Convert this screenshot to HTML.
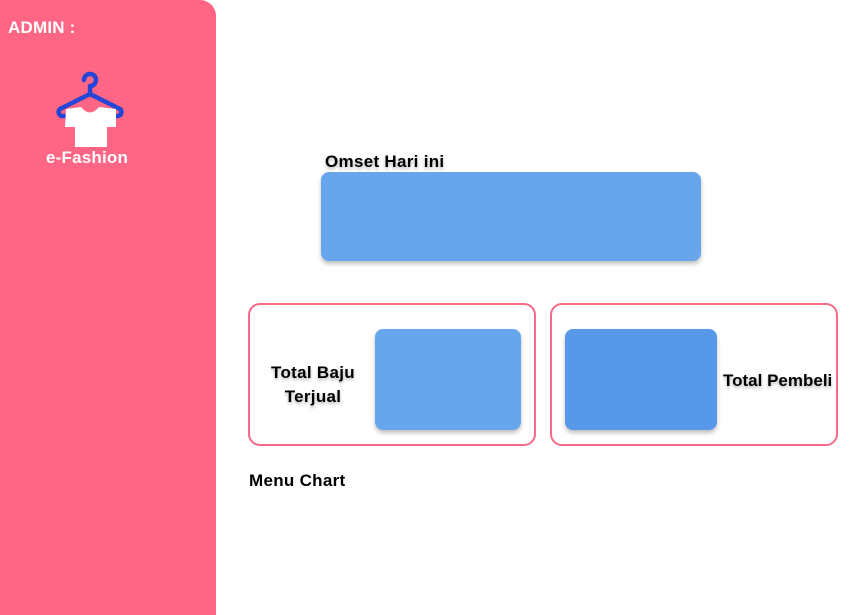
<!DOCTYPE html>
<html><head><meta charset="utf-8"><style>
body{margin:0;width:865px;height:615px;background:#fff;position:relative;overflow:hidden;font-family:"Liberation Sans",sans-serif;font-weight:bold}
.side{position:absolute;left:0;top:0;width:216px;height:615px;background:#FF6584;border-top-right-radius:16px}
.t{position:absolute;color:#000;font-size:17px;letter-spacing:0.3px;text-shadow:0 2px 3px rgba(0,0,0,.3);white-space:nowrap}
.box{position:absolute;border:2px solid #F76A87;border-radius:12px;box-sizing:border-box}
.b{position:absolute;border-radius:8px;box-shadow:0 3px 4px rgba(0,0,0,.25)}
</style></head><body>
<div class="side"></div>
<div style="position:absolute;left:8px;top:18px;color:#fff;font-size:17px;letter-spacing:0.2px">ADMIN :</div>
<svg style="position:absolute;left:50px;top:68px" width="80" height="82" viewBox="50 68 80 82">
<path d="M84 80 a6 6 0 1 1 6 6 v8 M90 94 L60 109 a4 4 0 0 0 2 7 L66 116 M90 94 L120 109 a4 4 0 0 1 -2 7 L114 116" fill="none" stroke="#2346D6" stroke-width="4.5" stroke-linecap="round" stroke-linejoin="round"/>
<path d="M66 109 L81 107 Q90 118 99 107 L116 109 L116 127 L107 127 L107 147 L75 147 L75 127 L65 127 Z" fill="#fff"/>
</svg>
<div style="position:absolute;left:46px;top:148px;color:#fff;font-size:17px;letter-spacing:0.2px">e-Fashion</div>
<div class="t" style="left:325px;top:152px">Omset Hari ini</div>
<div class="b" style="left:321px;top:172px;width:380px;height:89px;background:#67A5EC"></div>
<div class="box" style="left:248px;top:303px;width:288px;height:143px"></div>
<div class="box" style="left:550px;top:303px;width:288px;height:143px"></div>
<div class="b" style="left:375px;top:329px;width:146px;height:101px;background:#67A5EC"></div>
<div class="b" style="left:565px;top:329px;width:152px;height:101px;background:#5799E8"></div>
<div class="t" style="left:263px;top:361px;width:100px;text-align:center;line-height:24px">Total Baju<br>Terjual</div>
<div class="t" style="left:723px;top:371px;letter-spacing:0">Total Pembeli</div>
<div class="t" style="left:249px;top:471px;text-shadow:none">Menu Chart</div>
</body></html>
